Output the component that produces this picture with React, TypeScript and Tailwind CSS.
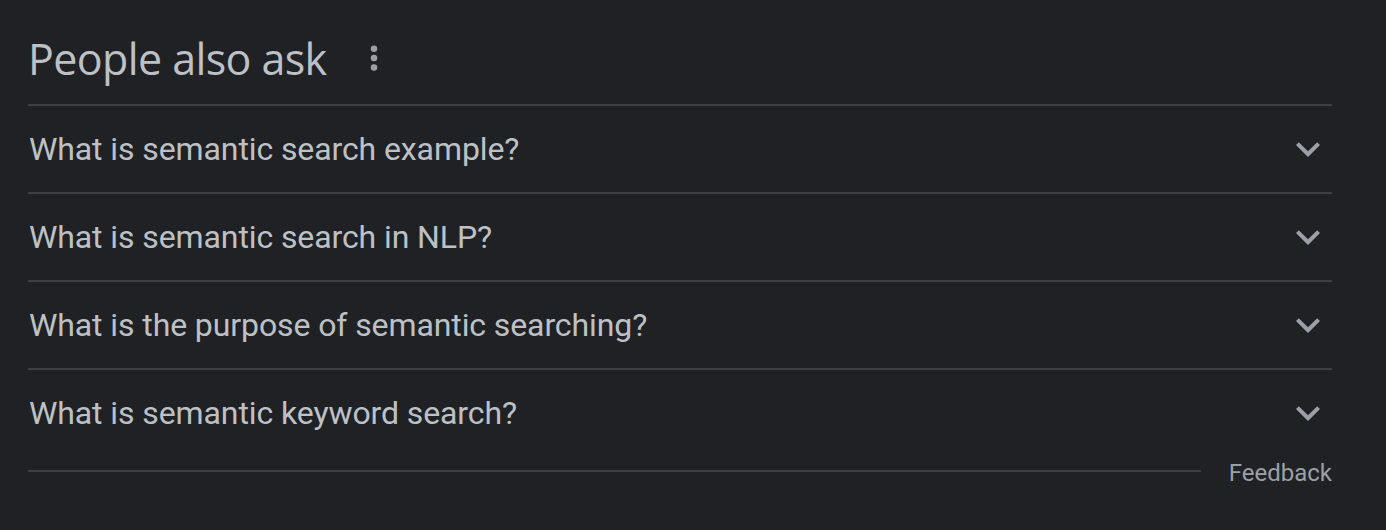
import React from "react";

const questions = [
  "What is semantic search example?",
  "What is semantic search in NLP?",
  "What is the purpose of semantic searching?",
  "What is semantic keyword search?",
];

function Chevron() {
  return (
    <svg width="48" height="48" viewBox="0 0 24 24" className="text-[#9aa0a6]">
      <path d="M7.41 8.59 12 13.17l4.59-4.58L18 10l-6 6-6-6 1.41-1.41z" fill="currentColor" />
    </svg>
  );
}

export default function App() {
  return (
    <div className="w-[1386px] h-[530px] bg-[#202124] pl-[28px] pr-[54px] pt-[26px] font-['Roboto',_'Liberation_Sans',_sans-serif]">
      <div className="flex items-center h-[78px] pb-[14px]">
        <h2 className="text-[43px] leading-none text-[#bdc1c6] font-['Open_Sans',_sans-serif] tracking-[-0.6px]">People also ask</h2>
        <svg width="30" height="30" viewBox="0 0 24 24" className="ml-[32px] text-[#9aa0a6]">
          <circle cx="12" cy="4.5" r="2.6" fill="currentColor" />
          <circle cx="12" cy="12" r="2.6" fill="currentColor" />
          <circle cx="12" cy="19.5" r="2.6" fill="currentColor" />
        </svg>
      </div>
      <div>
        {questions.map((q) => (
          <div key={q} className="border-t-2 border-[#3c4043] h-[88px] flex items-center justify-between">
            <span className="text-[32px] text-[#bdc1c6] pl-[1px] tracking-[-0.1px]">{q}</span>
            <Chevron />
          </div>
        ))}
      </div>
      <div className="flex items-center h-[30px]">
        <div className="flex-1 border-t-2 border-[#3c4043]" />
        <span className="ml-[28px] mt-[4px] text-[24px] leading-[30px] text-[#9aa0a6]">Feedback</span>
      </div>
    </div>
  );
}
